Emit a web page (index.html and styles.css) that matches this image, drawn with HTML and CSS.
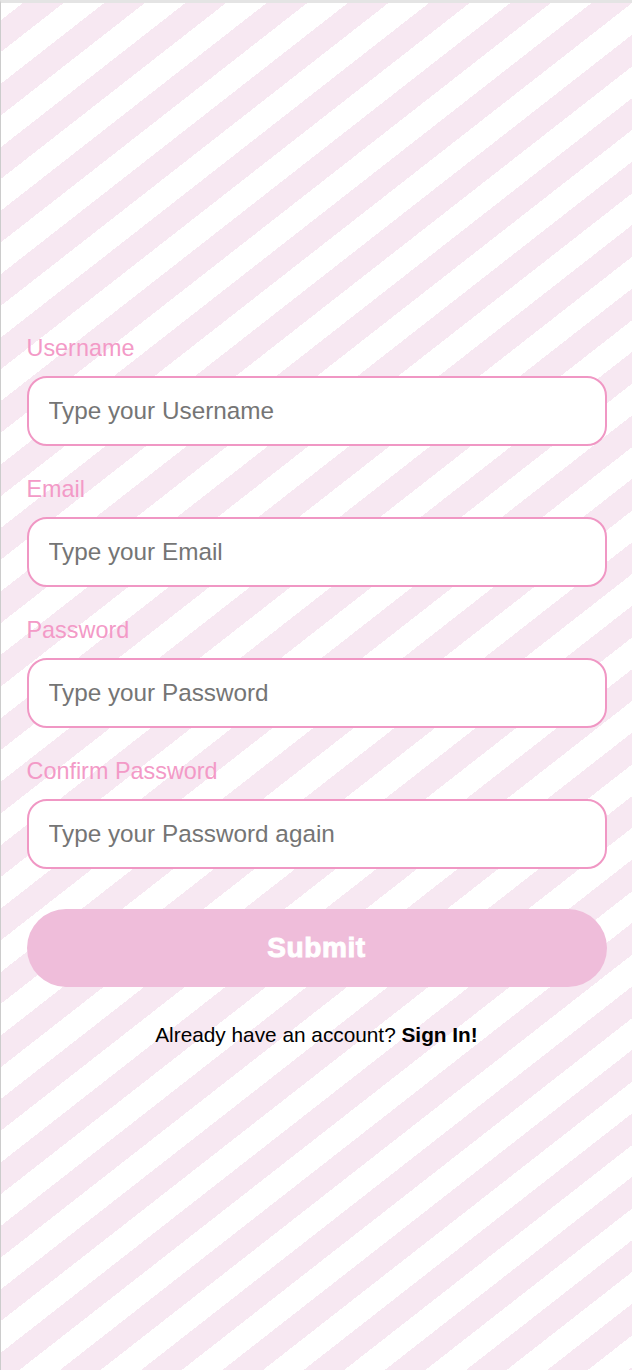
FILE: index.html
```html
<!DOCTYPE html>
<html lang="en">
<head>
<meta charset="utf-8">
<title>Sign Up</title>
<link rel="stylesheet" href="styles.css">
</head>
<body>
<div class="page">
  <form class="signup">
    <div class="field">
      <label class="label" for="username">Username</label>
      <input class="input" id="username" type="text" placeholder="Type your Username">
    </div>
    <div class="field">
      <label class="label" for="email">Email</label>
      <input class="input" id="email" type="email" placeholder="Type your Email">
    </div>
    <div class="field">
      <label class="label" for="password">Password</label>
      <input class="input" id="password" type="password" placeholder="Type your Password">
    </div>
    <div class="field">
      <label class="label" for="confirm">Confirm Password</label>
      <input class="input" id="confirm" type="password" placeholder="Type your Password again">
    </div>
    <button class="submit" type="button">Submit</button>
    <p class="footer">Already have an account? <a class="signin" href="#">Sign In!</a></p>
  </form>
</div>
</body>
</html>
```

FILE: styles.css
```css
html, body {
  margin: 0;
  padding: 0;
}

body {
  font-family: "Liberation Sans", Arial, sans-serif;
}

.page {
  box-sizing: border-box;
  min-height: 100vh;
  border-top: 3px solid #e4e4e4;
  border-left: 1px solid #cccccc;
  background-color: #ffffff;
  background-image: repeating-linear-gradient(142deg,
    #ffffff 0 13.5px,
    #f7e8f2 13.5px 38.5px,
    #ffffff 38.5px 50px);
  padding-top: 332px;
}

.signup {
  width: 580px;
  margin: 0 auto;
  display: flex;
  flex-direction: column;
}

.field {
  display: flex;
  flex-direction: column;
  gap: 14px;
  margin-bottom: 30px;
}

.label {
  font-size: 23.4px;
  line-height: 27px;
  color: #f39ac7;
}

.input {
  box-sizing: border-box;
  height: 70px;
  width: 100%;
  border: 2px solid #f097c4;
  border-radius: 20px;
  background: #ffffff;
  padding: 0 20px;
  font-family: "Liberation Sans", Arial, sans-serif;
  font-size: 24.3px;
  color: #333;
  outline: none;
}

.input::placeholder {
  color: #757575;
}

.submit {
  margin-top: 10px;
  height: 78px;
  border: none;
  border-radius: 39px;
  background: #efbdda;
  color: #ffffff;
  font-family: "Liberation Sans", Arial, sans-serif;
  font-size: 28px;
  font-weight: 700;
  -webkit-text-stroke: 1px #ffffff;
  letter-spacing: 0.6px;
  cursor: pointer;
}

.footer {
  margin: 36px 0 0;
  text-align: center;
  font-size: 20.8px;
  line-height: 24px;
  color: #000000;
}

.signin {
  color: #000000;
  font-weight: 700;
  text-decoration: none;
}
```
